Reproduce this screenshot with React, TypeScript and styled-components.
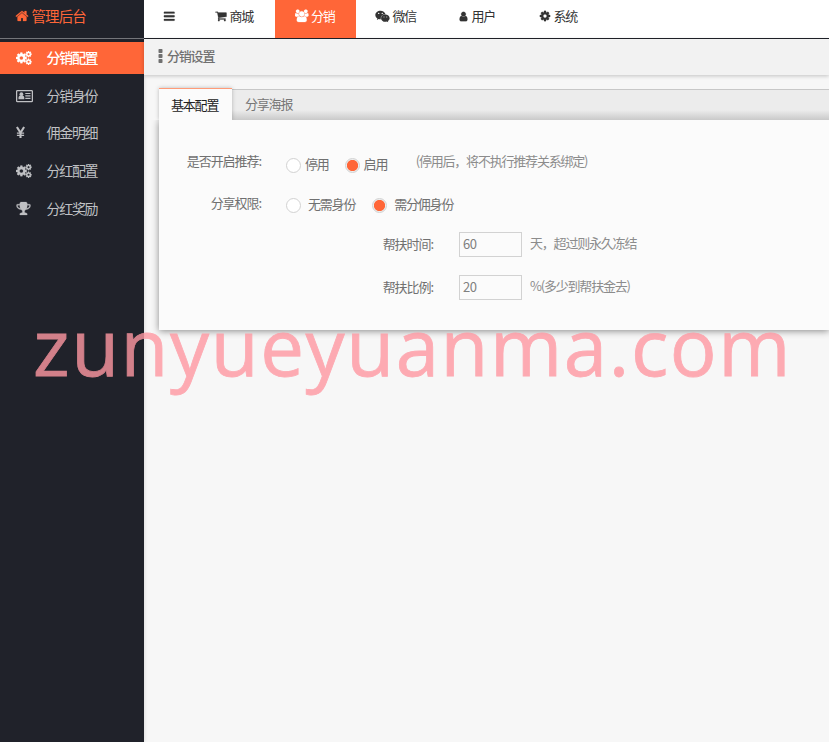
import React from "react";
import styled, { createGlobalStyle, css } from "styled-components";
import { FaWeixin } from "react-icons/fa";

const Global = createGlobalStyle`
  * { box-sizing: border-box; }
  body { margin: 0; background: #f7f7f7; overflow: hidden; }
  button, input { font: inherit; letter-spacing: inherit; }
`;

const paths = {
  home: "M1472 992v480q0 26-19 45t-45 19h-384v-384h-256v384h-384q-26 0-45-19t-19-45v-480q0-1 .5-3t.5-3l575-474 575 474q1 2 1 6zm223-69l-62 74q-8 9-21 11h-3q-13 0-21-7l-692-577-692 577q-12 8-24 7-13-2-21-11l-62-74q-8-10-7-23.5t11-21.5l719-599q32-26 76-26t76 26l244 204v-195q0-14 9-23t23-9h192q14 0 23 9t9 23v408l219 182q10 8 11 21.5t-7 23.5z",
  bars: "M1664 1344v128q0 26-19 45t-45 19h-1408q-26 0-45-19t-19-45v-128q0-26 19-45t45-19h1408q26 0 45 19t19 45zm0-512v128q0 26-19 45t-45 19h-1408q-26 0-45-19t-19-45v-128q0-26 19-45t45-19h1408q26 0 45 19t19 45zm0-512v128q0 26-19 45t-45 19h-1408q-26 0-45-19t-19-45v-128q0-26 19-45t45-19h1408q26 0 45 19t19 45z",
  cart: "M704 1536q0 52-38 90t-90 38-90-38-38-90 38-90 90-38 90 38 38 90zm896 0q0 52-38 90t-90 38-90-38-38-90 38-90 90-38 90 38 38 90zm128-1088v512q0 24-16.5 42.5t-40.5 21.5l-1044 122q13 60 13 70 0 16-24 64h920q26 0 45 19t19 45-19 45-45 19h-1024q-26 0-45-19t-19-45q0-11 8-31.5t16-36 21.5-40 15.5-29.5l-177-823h-204q-26 0-45-19t-19-45 19-45 45-19h256q16 0 28.5 6.5t19.5 15.5 13 24.5 8 26 5.5 29.5 4.5 26h1201q26 0 45 19t19 45z",
  cog: "M1152 896q0-106-75-181t-181-75-181 75-75 181 75 181 181 75 181-75 75-181zm512-109v222q0 12-8 23t-20 13l-185 28q-19 54-39 91 35 50 107 138 10 12 10 25t-9 23q-27 37-99 108t-94 71q-12 0-26-9l-138-108q-44 23-91 38-16 136-29 186-7 28-36 28h-222q-14 0-24.5-8.5t-11.5-21.5l-28-184q-49-16-90-37l-141 107q-10 9-25 9-14 0-25-11-126-114-165-168-7-10-7-23 0-12 8-23 15-21 51-66.5t54-70.5q-27-50-41-99l-183-27q-13-2-21-12.5t-8-23.5v-222q0-12 8-23t19-13l186-28q14-46 39-92-40-57-107-138-10-12-10-24 0-10 9-23 26-36 98.5-107.5t94.5-71.5q13 0 26 10l138 107q44-23 91-38 16-136 29-186 7-28 36-28h222q14 0 24.5 8.5t11.5 21.5l28 184q49 16 90 37l142-107q9-9 24-9 13 0 25 10 129 119 165 170 7 8 7 22 0 12-8 23-15 21-51 66.5t-54 70.5q26 50 41 98l183 28q13 2 21 12.5t8 23.5z",
  user: "M1536 1399q0 109-62.5 187t-150.5 78h-854q-88 0-150.5-78t-62.5-187q0-85 8.5-160.5t31.5-152 58.5-131 94-89 134.5-34.5q131 128 313 128t313-128q76 0 134.5 34.5t94 89 58.5 131 31.5 152 8.5 160.5zm-256-887q0 159-112.5 271.5t-271.5 112.5-271.5-112.5-112.5-271.5 112.5-271.5 271.5-112.5 271.5 112.5 112.5 271.5z",
  users: "M593 896q-162 5-265 128h-134q-82 0-138-40.5t-56-118.5q0-353 124-353 6 0 43.5 21t97.5 42.5 119 21.5q67 0 133-23-5 37-5 66 0 139 81 256zm1071 637q0 120-73 189.5t-194 69.5h-874q-121 0-194-69.5t-73-189.5q0-53 3.5-103.5t14-109 26.5-108.5 43-97.5 62-81 85.5-53.5 111.5-20q10 0 43 21.5t73 48 107 48 135 21.5 135-21.5 107-48 73-48 43-21.5q61 0 111.5 20t85.5 53.5 62 81 43 97.5 26.5 108.5 14 109 3.5 103.5zm-1024-1277q0 106-75 181t-181 75-181-75-75-181 75-181 181-75 181 75 75 181zm704 384q0 159-112.5 271.5t-271.5 112.5-271.5-112.5-112.5-271.5 112.5-271.5 271.5-112.5 271.5 112.5 112.5 271.5zm576 225q0 78-56 118.5t-138 40.5h-134q-103-123-265-128 81-117 81-256 0-29-5-66 66 23 133 23 59 0 119-21.5t97.5-42.5 43.5-21q124 0 124 353zm-128-609q0 106-75 181t-181 75-181-75-75-181 75-181 181-75 181 75 75 181z",
  trophy: "M522 883q-74-162-74-371h-256v96q0 78 94.5 162t235.5 113zm1078-275v-96h-256q0 209-74 371 141-29 235.5-113t94.5-162zm128-128v128q0 71-41.5 143t-112 130-173 97.5-215.5 44.5q-42 54-95 95-38 34-52.5 72.5t-14.5 89.5q0 54 30.5 91t97.5 37q75 0 133.5 45.5t58.5 114.5v64q0 14-9 23t-23 9h-832q-14 0-23-9t-9-23v-64q0-69 58.5-114.5t133.5-45.5q67 0 97.5-37t30.5-91q0-51-14.5-89.5t-52.5-72.5q-53-41-95-95-113-5-215.5-44.5t-173-97.5-112-130-41.5-143v-128q0-40 28-68t68-28h288v-96q0-66 47-113t113-47h576q66 0 113 47t47 113v96h288q40 0 68 28t28 68z",
};

const Glyph = ({ d, size, box = "0 0 1792 1792" }: { d: string; size: number; box?: string }) => (
  <svg width={size} height={size} viewBox={box} fill="currentColor" stroke="currentColor" strokeWidth="30"><path d={d} /></svg>
);

const Cogs = () => (
  <svg width="16" height="14" viewBox="0 0 16 14" fill="currentColor" stroke="currentColor" strokeWidth="30">
    <path d={paths.cog} transform="translate(-0.9 0.7) scale(0.007)" />
    <path d={paths.cog} transform="translate(8.9 -0.5) scale(0.0041)" />
    <path d={paths.cog} transform="translate(8.9 7.1) scale(0.0041)" />
  </svg>
);

const IdCard = () => (
  <svg width="17" height="14" viewBox="0 0 17 14" fill="currentColor">
    <rect x="0.6" y="1.6" width="15.8" height="11" rx="0.8" fill="none" stroke="currentColor" strokeWidth="1.3" />
    <circle cx="5.4" cy="5.2" r="1.9" />
    <path d="M2.5 10.300V8.600Q2.700 6.800 4 6.400q1.400.8 2.800 0Q8.100 6.800 8.300 8.600V10.300z" />
    <path d="M9.300 3.900h5.200v1.200H9.300zM9.300 6.300h5.200v1.200H9.300zM9.300 8.700h5.200v1.200H9.300z" />
  </svg>
);

const Yen = () => (
  <svg width="9" height="14" viewBox="0 0 9 14" fill="none" stroke="currentColor">
    <path d="M0.900 1L4.500 6.800L8.100 1M4.500 6.500V12" strokeWidth="2.100" />
    <path d="M0.900 7.100H8.100M0.900 9.300H8.100" strokeWidth="1.300" />
  </svg>
);

const Page = styled.div`
  position: relative;
  display: flex;
  width: 829px;
  height: 742px;
  overflow: hidden;
  background: #f7f7f7;
  color: #707070;
  font: 13px/20px "Noto Sans CJK SC", sans-serif;
  letter-spacing: -1.2px;
  white-space: nowrap;
`;

const Sidebar = styled.aside`
  flex: 0 0 144px;
  background: #20222a;
  color: #bfc0c3;
  box-shadow: 0 0 4px rgba(0, 0, 0, 0.15);
`;

const Brand = styled.div`
  display: flex;
  align-items: center;
  gap: 3px;
  height: 39px;
  padding: 0 0 7px 14.5px;
  border-bottom: 1px solid #74757a;
  color: #ff6638;
  font-size: 14.5px;
  letter-spacing: -0.9px;
`;

const Menu = styled.nav`
  display: grid;
  gap: 5.7px;
  padding-top: 3px;
`;

const MenuItem = styled.a<{ $active?: boolean }>`
  display: grid;
  grid-template-columns: 30.5px 1fr;
  align-items: center;
  height: 32px;
  padding: 0 0 2px 16px;
  font-size: 14px;
  letter-spacing: -1.3px;
  ${(p) => p.$active && css`background: #ff6638; color: #fff; font-weight: 500;`}
  svg { display: block; margin-top: 2px; }
`;

const Main = styled.main`
  flex: 1;
  min-width: 0;
`;

const TopBar = styled.header`
  display: flex;
  height: 39px;
  border-bottom: 1px solid #20222a;
  background: #fff;
`;

const TopItem = styled.a<{ $width: number; $active?: boolean }>`
  display: flex;
  align-items: center;
  gap: 2.5px;
  width: ${(p) => p.$width}px;
  padding: 0 0 6px 19px;
  color: #333;
  ${(p) => p.$active && css`padding-left: 20px; background: #ff6638; color: #fff;`}
`;

const TitleBar = styled.div`
  display: flex;
  align-items: center;
  gap: 4px;
  height: 36px;
  padding: 0 0 2px 14px;
  background: #f2f2f2;
  box-shadow: 0 1px 4px rgba(0, 0, 0, 0.22);
  color: #707070;
  font-weight: 500;
`;

const Card = styled.section`
  margin: 12px 0 0 15px;
`;

const Tabs = styled.div`
  display: flex;
  align-items: flex-end;
  height: 33px;
  background: linear-gradient(#0000 2px, #c8c8c8 2px, #c8c8c8 3px, #ececec 3px, #ececec 23px, #c9c9c9 33px);
`;

const Tab = styled.button<{ $active?: boolean }>`
  height: ${(p) => (p.$active ? 32 : 31)}px;
  padding: ${(p) => (p.$active ? "1px 14px 0 12px" : "0 13px 1px")};
  border: 0;
  background: none;
  color: #777;
  ${(p) => p.$active && css`
    width: 73px;
    background: #fbfbfb;
    color: #222;
    box-shadow: inset 0 1px #ff9b78, 0 0 4px rgba(0, 0, 0, 0.25);
  `}
`;

const Panel = styled.form`
  position: relative;
  height: 210px;
  padding-top: 31px;
  background: #fbfbfb;
  box-shadow: 0 1px 7px rgba(0, 0, 0, 0.45);
  clip-path: inset(0 0 -14px -14px);
`;

const Row = styled.div<{ $height: number }>`
  display: flex;
  height: ${(p) => p.$height}px;
`;

const Label = styled.span<{ $end: number; $drop?: number }>`
  width: ${(p) => p.$end}px;
  padding-top: ${(p) => p.$drop ?? 0}px;
  text-align: right;
  letter-spacing: -1.05px;
`;

const Option = styled.label<{ $left: number; $gap: number; $top?: number }>`
  display: flex;
  align-items: center;
  gap: ${(p) => p.$gap}px;
  height: 20px;
  margin: ${(p) => p.$top ?? 3}px 0 0 ${(p) => p.$left}px;
`;

const Radio = styled.span<{ $on?: boolean }>`
  width: 15px;
  height: 15px;
  margin-top: 3px;
  border: 1px solid #d2d2d2;
  border-radius: 50%;
  background: ${(p) => (p.$on ? "radial-gradient(circle, #ff6638 5.2px, #eee 6px)" : "#fff")};
`;

const Hint = styled.span<{ $left: number; $drop?: number }>`
  margin-left: ${(p) => p.$left}px;
  padding-top: ${(p) => p.$drop ?? 0}px;
  color: #8c8c8c;
`;

const Field = styled.input`
  width: 63px;
  height: 25px;
  margin: 0 0 0 26px;
  padding: 0 3px 3px;
  border: 1px solid #d2d2d2;
  background: #fbfbfb;
  color: #808080;
  letter-spacing: -0.4px;
  outline: 0;
`;

const Watermark = styled.div`
  position: absolute;
  left: 33px;
  top: 311px;
  color: #ff98a2;
  opacity: 0.8;
  -webkit-text-stroke: 0.8px #ff98a2;
  font: 78px/70px "Open Sans", sans-serif;
  letter-spacing: 1.6px;
  pointer-events: none;
`;

const menu = [
  { text: "分销配置", icon: <Cogs /> },
  { text: "分销身份", icon: <IdCard /> },
  { text: "佣金明细", icon: <Yen /> },
  { text: "分红配置", icon: <Cogs /> },
  { text: "分红奖励", icon: <Glyph d={paths.trophy} size={15} /> },
];

export default function App() {
  return (
    <Page>
      <Global />
      <Sidebar>
        <Brand><Glyph d={paths.home} size={14} />管理后台</Brand>
        <Menu>
          {menu.map((m, i) => <MenuItem key={m.text} $active={i === 0}>{m.icon}{m.text}</MenuItem>)}
        </Menu>
      </Sidebar>
      <Main>
        <TopBar>
          <TopItem $width={52}><Glyph d={paths.bars} size={12.5} /></TopItem>
          <TopItem $width={79}><Glyph d={paths.cart} size={12} />商城</TopItem>
          <TopItem $width={81} $active><Glyph d={paths.users} size={13.5} box="0 0 1920 1792" />分销</TopItem>
          <TopItem $width={83}><FaWeixin size={15} />微信</TopItem>
          <TopItem $width={81}><Glyph d={paths.user} size={11} />用户</TopItem>
          <TopItem $width={77}><Glyph d={paths.cog} size={12} />系统</TopItem>
        </TopBar>
        <TitleBar>
          <svg width="5" height="14" viewBox="0 0 5 14" fill="currentColor">
            <rect x="0.500" width="4" height="4" rx="0.800" />
            <rect x="0.500" y="5" width="4" height="4" rx="0.800" />
            <rect x="0.500" y="10" width="4" height="4" rx="0.800" />
          </svg>
          分销设置
        </TitleBar>
        <Card>
          <Tabs>
            <Tab $active>基本配置</Tab>
            <Tab>分享海报</Tab>
          </Tabs>
          <Panel>
            <Row $height={41}>
              <Label $end={102}>是否开启推荐:</Label>
              <Option $left={25} $gap={4}><Radio />停用</Option>
              <Option $left={16} $gap={4}><Radio $on />启用</Option>
              <Hint $left={28.5}>(停用后，将不执行推荐关系绑定)</Hint>
            </Row>
            <Row $height={40}>
              <Label $end={102} $drop={1}>分享权限:</Label>
              <Option $left={25} $gap={7} $top={2}><Radio />无需身份</Option>
              <Option $left={17} $gap={7} $top={2}><Radio $on />需分佣身份</Option>
            </Row>
            <Row $height={43}>
              <Label $end={274} $drop={2}>帮扶时间:</Label>
              <Field defaultValue="60" />
              <Hint $left={8} $drop={1}>天，超过则永久冻结</Hint>
            </Row>
            <Row $height={43}>
              <Label $end={274} $drop={2}>帮扶比例:</Label>
              <Field defaultValue="20" />
              <Hint $left={8} $drop={1}>%(多少到帮扶金去)</Hint>
            </Row>
          </Panel>
        </Card>
      </Main>
      <Watermark>zunyueyuanma.com</Watermark>
    </Page>
  );
}
